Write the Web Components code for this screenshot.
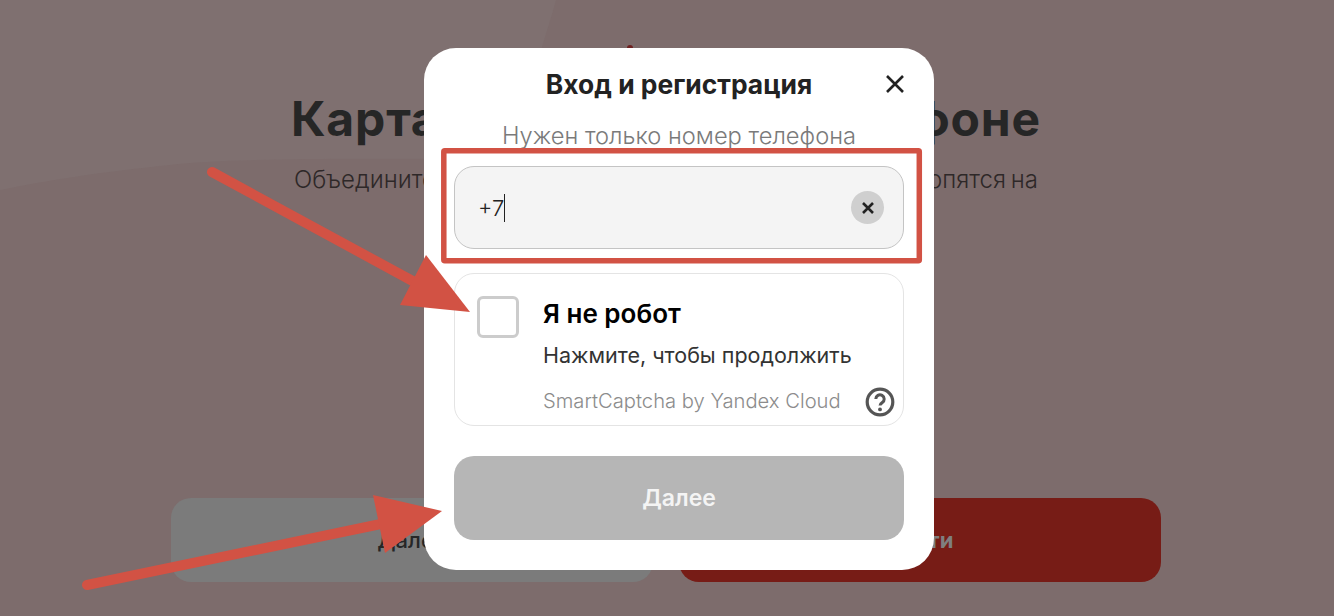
<!DOCTYPE html>
<html lang="ru"><head><meta charset="utf-8"><title>Вход</title>
<style>
html,body{margin:0;padding:0;height:616px;overflow:hidden;font-family:Inter,"Noto Sans",sans-serif;background:#7d6c6c}
</style></head><body>
<promo-page>
  <auth-dialog></auth-dialog>
  <arrow-annotations></arrow-annotations>
</promo-page>
<script>
function el(name,html){customElements.define(name,class extends HTMLElement{constructor(){super();this.attachShadow({mode:'open'}).innerHTML=html}})}
el('promo-page',`<style>
:host{display:block;position:relative;width:1334px;height:616px;overflow:hidden;background:#7d6c6c;color:#262626}
.bg{position:absolute;inset:0}
.hero{position:relative;display:flex;flex-direction:column;align-items:center;height:616px;box-sizing:border-box;padding:89px 2px 0 0}
h1{margin:0;font-size:48px;letter-spacing:.85px;line-height:60px;font-weight:700;white-space:nowrap}
p{margin:15px 0 0;font-size:24px;word-spacing:-2px;line-height:32px;font-weight:300;color:#2e2828;white-space:nowrap}
.acts{display:flex;gap:26px;margin-top:auto;margin-bottom:34px}
.b{width:482px;height:84px;border-radius:20px;display:flex;align-items:center;justify-content:center;font-size:22px}
.g{background:#7b7b7b;color:#262626;font-weight:500}.r{background:#771c16;color:#7f7f7f;font-weight:700}
.dot{position:absolute;left:627px;top:45px;width:6px;height:6px;border-radius:50%;background:#6e2020}
</style>
<svg class="bg" width="1334" height="616"><path d="M0 0H556C548 30 536 60 530 100L526 160C360 158 230 158 170 165C100 172 50 180 0 190Z" fill="#7f7070"/></svg>
<i class="dot"></i>
<div class="hero">
<h1>Карта лояльности в телефоне</h1>
<p>Объедините карты лояльности, и бонусы теперь сами копятся на</p>
<div class="acts"><div class="b g">Далее</div><div class="b r">Войти</div></div>
</div><slot></slot>`);
el('auth-dialog',`<style>
:host{position:absolute;left:424px;top:48px;width:510px;height:522px;box-sizing:border-box;padding:0 30px;background:#fff;border-radius:32px;display:flex;flex-direction:column;color:#222}
.head{display:flex;justify-content:center;align-items:center;height:72px;position:relative;font-size:26.4px;font-weight:700}
.x{position:absolute;right:-3px;top:24px;width:24px;height:24px}
.sub{margin-top:1px;text-align:center;font-size:23.7px;line-height:30px;color:#7a7a7a;font-weight:300}
</style>
<div class="head">Вход и регистрация<svg class="x" viewBox="0 0 24 24"><path d="M4 4L20 20M20 4L4 20" stroke="#222" stroke-width="2.6" fill="none"/></svg></div>
<div class="sub">Нужен только номер телефона</div>
<phone-field></phone-field><smart-captcha></smart-captcha><next-button></next-button>`);
el('phone-field',`<style>
:host{display:flex;align-items:center;justify-content:space-between;height:83px;box-sizing:border-box;margin-top:15px;padding:0 19px 0 23px;border:1px solid #c4c4c4;border-radius:20px;background:#f4f4f4;font-size:22px;font-weight:300;color:#222}
.t{display:flex;align-items:center}.c{width:1px;height:28px;background:#222}
.k{width:33px;height:33px;border-radius:50%;background:#cfcfcf;display:flex;align-items:center;justify-content:center}
</style><span class="t">+7<i class="c"></i></span><span class="k"><svg width="14" height="14" viewBox="0 0 14 14"><path d="M2 2L12 12M12 2L2 12" stroke="#222" stroke-width="2.6"/></svg></span>`);
el('smart-captcha',`<style>
:host{display:flex;position:relative;height:153px;box-sizing:border-box;margin-top:24px;border:1px solid #e4e4e4;border-radius:20px;padding:22px 0 0 22px;background:#fff}
.box{width:42px;height:42px;box-sizing:border-box;border:3px solid #ccc;border-radius:6px;flex:none}
.col{margin-left:24px;display:flex;flex-direction:column}
b{font-size:26px;line-height:36px;font-weight:600;color:#000}
span{margin-top:8px;font-size:21.5px;line-height:30px;color:#333}
small{margin-top:17px;font-size:20.2px;line-height:28px;color:#8c8c8c;font-weight:300}
svg{position:absolute;right:8px;bottom:8px}
</style><div class="box"></div><div class="col"><b>Я не робот</b><span>Нажмите, чтобы продолжить</span><small>SmartCaptcha by Yandex Cloud</small></div>
<svg width="30" height="30" viewBox="0 0 30 30"><circle cx="15" cy="15" r="12.8" fill="none" stroke="#555" stroke-width="3.2"/><path d="M10.8 12a4.2 4.2 0 1 1 6.4 3.6c-1.4.9-2.2 1.6-2.2 3" fill="none" stroke="#555" stroke-width="3"/><circle cx="15" cy="22.4" r="1.9" fill="#555"/></svg>`);
el('next-button',`<style>
:host{display:flex;align-items:center;justify-content:center;height:84px;margin-top:30px;border-radius:20px;background:#b6b6b6;color:#f4f4f4;font-size:23px;font-weight:600}
</style>Далее`);
el('arrow-annotations',`<style>
:host{position:absolute;inset:0;pointer-events:none}
svg{position:absolute;inset:0}
</style><svg width="1334" height="616" fill="#d25244" stroke="none">
<rect x="443.8" y="150.8" width="475.5" height="110" rx="1" fill="none" stroke="#d25244" stroke-width="5.5"/>
<path d="M212 172L420 285" stroke="#d25244" stroke-width="10" stroke-linecap="round"/>
<path d="M426 255L470 312L400 305Z"/>
<path d="M87 585L400 520" stroke="#d25244" stroke-width="10" stroke-linecap="round"/>
<path d="M373 495L442 511L385 553Z"/></svg>`);
</script></body></html>
